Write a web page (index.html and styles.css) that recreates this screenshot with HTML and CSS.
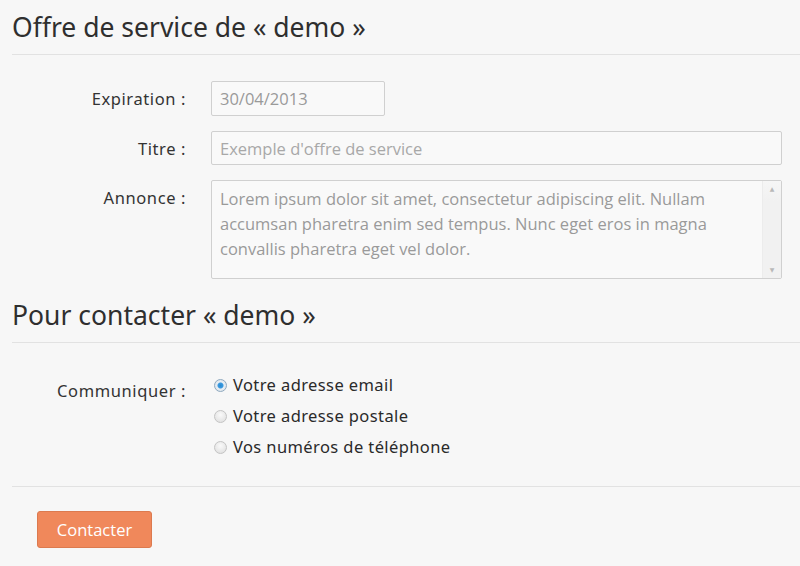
FILE: index.html
```html
<!DOCTYPE html>
<html lang="fr">
  <head>
    <meta charset="UTF-8" />
    <meta name="viewport" content="width=device-width, initial-scale=1.0" />
    <title>Offre de service</title>
    <link rel="stylesheet" href="styles.css">
  </head>
  <body>
    <div class="page">
      <h1 class="title">Offre de service de « demo »</h1>
      <div class="form">
        <div class="row">
          <label class="label">Expiration :</label>
          <input class="field date" type="text" value="30/04/2013" readonly>
        </div>
        <div class="row">
          <label class="label">Titre :</label>
          <input class="field wide" type="text" placeholder="Exemple d'offre de service">
        </div>
        <div class="row top">
          <label class="label">Annonce :</label>
          <div class="area-box">
            <textarea class="area" readonly>Lorem ipsum dolor sit amet, consectetur adipiscing elit. Nullam accumsan pharetra enim sed tempus. Nunc eget eros in magna convallis pharetra eget vel dolor.</textarea>
            <div class="scrollbar">
              <span class="arrow">&#9650;</span>
              <span class="arrow">&#9660;</span>
            </div>
          </div>
        </div>
      </div>

      <h1 class="title second">Pour contacter « demo »</h1>
      <div class="form contact">
        <div class="row top">
          <label class="label radio-label">Communiquer :</label>
          <div class="choices">
            <label class="choice"><input type="radio" name="via" checked> Votre adresse email</label>
            <label class="choice"><input type="radio" name="via"> Votre adresse postale</label>
            <label class="choice"><input type="radio" name="via"> Vos numéros de téléphone</label>
          </div>
        </div>
      </div>

      <div class="actions">
        <button class="btn">Contacter</button>
      </div>
    </div>
  </body>
</html>
```

FILE: styles.css
```css
html, body {
  margin: 0;
  background: #f7f7f7;
}

body {
  font-family: "Noto Sans", "DejaVu Sans", sans-serif;
  color: #333;
}

.page {
  padding: 0 0 0 12px;
}

.title {
  margin: 0;
  padding: 10px 0 9px;
  font-size: 26.5px;
  line-height: 35px;
  font-weight: normal;
  color: #2f2f2f;
  border-bottom: 1px solid #e2e2e2;
}

.form {
  padding: 26px 0 0;
}

.form + .title.second {
  margin-top: 9px;
}

.row {
  display: flex;
  align-items: center;
  margin-bottom: 15px;
}

.row:last-child {
  margin-bottom: 0;
}

.row.top {
  align-items: flex-start;
}

.label {
  width: 174px;
  margin-right: 25px;
  text-align: right;
  font-size: 16.5px;
  letter-spacing: 0.6px;
  color: #333;
}

.row.top .label {
  padding-top: 6px;
}

.field,
.area {
  font-family: "Open Sans", sans-serif;
  font-size: 16.5px;
  color: #9a9a9a;
  outline: none;
}

.field {
  box-sizing: border-box;
  height: 35px;
  padding: 0 8px;
  border: 1px solid #d0d0d0;
  border-radius: 2px;
  background: #f9f9f9;
}

.field::placeholder {
  color: #a8a8a8;
}

.date {
  width: 174px;
}

.wide {
  width: 571px;
  height: 34px;
}

.area-box {
  box-sizing: border-box;
  display: flex;
  width: 571px;
  height: 99px;
  border: 1px solid #d0d0d0;
  border-radius: 2px;
  background: #f9f9f9;
}

.area {
  flex: 1;
  margin: 0;
  padding: 5px 8px;
  border: 0;
  background: transparent;
  line-height: 25px;
  resize: none;
  overflow: hidden;
}

.scrollbar {
  width: 18px;
  display: flex;
  flex-direction: column;
  justify-content: space-between;
  align-items: center;
  padding: 4px 0;
  border-left: 1px solid #ececec;
  background: linear-gradient(to bottom, #f6f6f6 0, #f1f1f1 20px, #f1f1f1 100%);
}

.arrow {
  font-size: 6px;
  line-height: 8px;
  color: #b8b8b8;
}

.contact {
  padding-top: 30px;
  padding-bottom: 27px;
  border-bottom: 1px solid #e2e2e2;
}

.contact .radio-label {
  padding-top: 2px;
}

.choices {
  display: flex;
  flex-direction: column;
  gap: 7px;
}

.choice {
  display: flex;
  align-items: center;
  gap: 6px;
  font-size: 16.5px;
  letter-spacing: 0.4px;
  line-height: 24px;
  color: #2a2a2a;
}

.choice input {
  appearance: none;
  -webkit-appearance: none;
  margin: 0 0 0 3px;
  width: 13px;
  height: 13px;
  border-radius: 50%;
  border: 1px solid #c4c4c4;
  background: radial-gradient(circle at 50% 35%, #fafafa, #dcdcdc);
  box-sizing: border-box;
}

.choice input:checked {
  border-color: #8fa9bf;
  background: radial-gradient(circle, #2b8ad0 0, #3b9ae0 2.5px, #e8eef3 3.5px, #d6dee6 100%);
}

.actions {
  padding: 24px 0 20px 25px;
}

.btn {
  width: 115px;
  height: 37px;
  border: 1px solid #dc7a4f;
  border-radius: 3px;
  background: #f0885b;
  color: #fff;
  font-family: "Open Sans", sans-serif;
  font-size: 16.5px;
  cursor: pointer;
}
```
